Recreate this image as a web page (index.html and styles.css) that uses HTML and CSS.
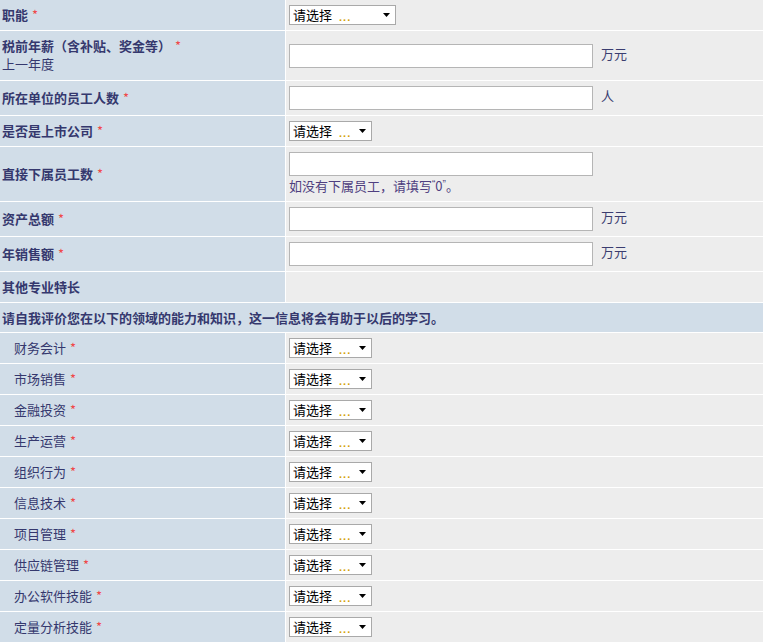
FILE: index.html
```html
<!DOCTYPE html>
<html lang="zh-CN">
<head>
<meta charset="utf-8">
<title>表单</title>
<link rel="stylesheet" href="styles.css">
</head>
<body>
<div class="form">
  <div class="lbl">职能 <span class="req">*</span></div>
  <div class="fld"><div class="sel sel-wide"><span class="opt">请选择</span><span class="dots">...</span><svg class="arr" width="7" height="4" viewBox="0 0 7 4"><polygon points="0,0 7,0 3.5,4" fill="#000"/></svg></div></div>

  <div class="lbl lbl-two"><div>税前年薪（含补贴、奖金等）<span class="req">*</span></div><div class="sub">上一年度</div></div>
  <div class="fld"><input class="txt" type="text"><span class="unit">万元</span></div>

  <div class="lbl">所在单位的员工人数 <span class="req">*</span></div>
  <div class="fld"><input class="txt" type="text"><span class="unit">人</span></div>

  <div class="lbl">是否是上市公司 <span class="req">*</span></div>
  <div class="fld"><div class="sel"><span class="opt">请选择</span><span class="dots">...</span><svg class="arr" width="7" height="4" viewBox="0 0 7 4"><polygon points="0,0 7,0 3.5,4" fill="#000"/></svg></div></div>

  <div class="lbl">直接下属员工数 <span class="req">*</span></div>
  <div class="fld fld-col"><input class="txt" type="text"><div class="hint">如没有下属员工，请填写<span class="q">“</span>0<span class="q">”</span>。</div></div>

  <div class="lbl">资产总额 <span class="req">*</span></div>
  <div class="fld"><input class="txt" type="text"><span class="unit">万元</span></div>

  <div class="lbl">年销售额 <span class="req">*</span></div>
  <div class="fld"><input class="txt" type="text"><span class="unit">万元</span></div>

  <div class="lbl">其他专业特长</div>
  <div class="fld"></div>

  <div class="head">请自我评价您在以下的领域的能力和知识，这一信息将会有助于以后的学习。</div>

  <div class="lbl item">财务会计 <span class="req">*</span></div>
  <div class="fld"><div class="sel"><span class="opt">请选择</span><span class="dots">...</span><svg class="arr" width="7" height="4" viewBox="0 0 7 4"><polygon points="0,0 7,0 3.5,4" fill="#000"/></svg></div></div>

  <div class="lbl item">市场销售 <span class="req">*</span></div>
  <div class="fld"><div class="sel"><span class="opt">请选择</span><span class="dots">...</span><svg class="arr" width="7" height="4" viewBox="0 0 7 4"><polygon points="0,0 7,0 3.5,4" fill="#000"/></svg></div></div>

  <div class="lbl item">金融投资 <span class="req">*</span></div>
  <div class="fld"><div class="sel"><span class="opt">请选择</span><span class="dots">...</span><svg class="arr" width="7" height="4" viewBox="0 0 7 4"><polygon points="0,0 7,0 3.5,4" fill="#000"/></svg></div></div>

  <div class="lbl item">生产运营 <span class="req">*</span></div>
  <div class="fld"><div class="sel"><span class="opt">请选择</span><span class="dots">...</span><svg class="arr" width="7" height="4" viewBox="0 0 7 4"><polygon points="0,0 7,0 3.5,4" fill="#000"/></svg></div></div>

  <div class="lbl item">组织行为 <span class="req">*</span></div>
  <div class="fld"><div class="sel"><span class="opt">请选择</span><span class="dots">...</span><svg class="arr" width="7" height="4" viewBox="0 0 7 4"><polygon points="0,0 7,0 3.5,4" fill="#000"/></svg></div></div>

  <div class="lbl item">信息技术 <span class="req">*</span></div>
  <div class="fld"><div class="sel"><span class="opt">请选择</span><span class="dots">...</span><svg class="arr" width="7" height="4" viewBox="0 0 7 4"><polygon points="0,0 7,0 3.5,4" fill="#000"/></svg></div></div>

  <div class="lbl item">项目管理 <span class="req">*</span></div>
  <div class="fld"><div class="sel"><span class="opt">请选择</span><span class="dots">...</span><svg class="arr" width="7" height="4" viewBox="0 0 7 4"><polygon points="0,0 7,0 3.5,4" fill="#000"/></svg></div></div>

  <div class="lbl item">供应链管理 <span class="req">*</span></div>
  <div class="fld"><div class="sel"><span class="opt">请选择</span><span class="dots">...</span><svg class="arr" width="7" height="4" viewBox="0 0 7 4"><polygon points="0,0 7,0 3.5,4" fill="#000"/></svg></div></div>

  <div class="lbl item">办公软件技能 <span class="req">*</span></div>
  <div class="fld"><div class="sel"><span class="opt">请选择</span><span class="dots">...</span><svg class="arr" width="7" height="4" viewBox="0 0 7 4"><polygon points="0,0 7,0 3.5,4" fill="#000"/></svg></div></div>

  <div class="lbl item">定量分析技能 <span class="req">*</span></div>
  <div class="fld"><div class="sel"><span class="opt">请选择</span><span class="dots">...</span><svg class="arr" width="7" height="4" viewBox="0 0 7 4"><polygon points="0,0 7,0 3.5,4" fill="#000"/></svg></div></div>
</div>
</body>
</html>
```

FILE: styles.css
```css
html, body {
  margin: 0;
  padding: 0;
  background: #ffffff;
}
body {
  font-family: "Noto Sans CJK SC", "Noto Sans", "Liberation Sans", sans-serif;
  font-size: 13px;
  color: #35386e;
}
.form {
  display: grid;
  grid-template-columns: 285px 1fr;
  gap: 1px;
  background: #ffffff;
}
.lbl {
  background: #d1dde8;
  padding: 5px 2px;
  line-height: 20px;
  font-weight: bold;
  display: flex;
  align-items: center;
  white-space: nowrap;
}
.lbl .req {
  color: #f04848;
  font-weight: normal;
  margin-left: 4px;
}
.lbl-two {
  flex-direction: column;
  align-items: flex-start;
  justify-content: center;
  padding: 6px 2px 7px;
  line-height: 18px;
}
.lbl-two .sub {
  font-weight: normal;
}
.item {
  font-weight: normal;
  padding-left: 14px;
}
.fld {
  background: #ededed;
  padding: 5px 3px;
  display: flex;
  align-items: center;
}
.fld-col {
  flex-direction: column;
  align-items: flex-start;
}
.txt {
  width: 304px;
  height: 24px;
  box-sizing: border-box;
  border: 1px solid #b5b5b5;
  background: #ffffff;
  margin: 0;
  padding: 0 3px;
  font: inherit;
  outline: none;
}
.unit {
  margin-left: 8px;
  line-height: 16px;
  padding-bottom: 4px;
  color: #3b3d70;
}
.hint {
  line-height: 20px;
  height: 20px;
  color: #4f3f80;
}
.hint .q {
  font-family: "Liberation Sans", sans-serif;
  font-size: 10px;
  line-height: 1;
  vertical-align: 3px;
}
.sel {
  width: 83px;
  height: 20px;
  box-sizing: border-box;
  border: 1px solid #a9a9a9;
  background: #ffffff;
  display: flex;
  align-items: center;
  padding-left: 3px;
}
.sel-wide {
  width: 107px;
}
.sel .opt {
  color: #000000;
  line-height: 18px;
}
.sel .dots {
  color: #d4a20a;
  font-size: 11px;
  font-weight: bold;
  letter-spacing: 1px;
  margin-left: 7px;
  line-height: 12px;
  padding-top: 4px;
  font-family: "Liberation Sans", sans-serif;
}
.sel .arr {
  margin-left: auto;
  margin-right: 5px;
  display: block;
}
.head {
  grid-column: 1 / 3;
  background: #d1dde8;
  font-weight: bold;
  padding: 5px 2px;
  line-height: 19px;
  height: 19px;
  white-space: nowrap;
}
```
